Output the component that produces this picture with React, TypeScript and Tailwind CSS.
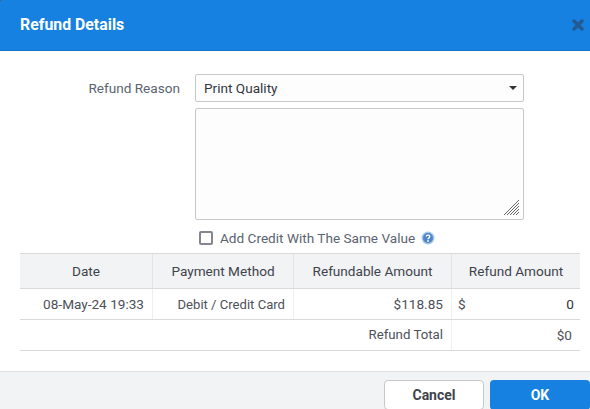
const columns = ["Date", "Payment Method", "Refundable Amount", "Refund Amount"];

function CloseIcon() {
  return (
    <svg width="12" height="12" viewBox="0 0 12 12" className="text-[#235a8f]">
      <path d="M2 2 L10 10 M10 2 L2 10" stroke="currentColor" strokeWidth="3.4" strokeLinecap="round" />
    </svg>
  );
}

function HelpIcon() {
  return (
    <svg width="14" height="14" viewBox="0 0 14 14">
      <circle cx="7" cy="7" r="6.5" fill="#a6c6ea" />
      <circle cx="7" cy="7" r="5" fill="#4f84c8" />
      <path d="M5.2 5.6 C5.2 3.6 8.8 3.6 8.8 5.6 C8.8 6.9 7 6.8 7 8.2" stroke="#fff" strokeWidth="1.4" fill="none" />
      <circle cx="7" cy="10" r="0.9" fill="#fff" />
    </svg>
  );
}

function ResizeGrip() {
  return (
    <svg width="15" height="15" viewBox="0 0 15 15" className="absolute right-[4px] bottom-[4px] text-[#666]">
      <path d="M0 15 L15 0 M3 15 L15 3 M6 15 L15 6 M9 15 L15 9 M12 15 L15 12" stroke="currentColor" strokeWidth="1" fill="none" />
    </svg>
  );
}

export default function App() {
  return (
    <div className="flex h-[409px] w-[590px] flex-col overflow-hidden bg-[#555] font-['Roboto',sans-serif] text-[13.6px] text-[#4d5159]">
      <header className="flex h-[51px] shrink-0 items-center justify-between rounded-tl-[2px] border-b border-[#1474cb] bg-[#1681e0] pr-[6px] pl-[20px]">
        <h1 className="text-[15.85px] font-bold text-white">Refund Details</h1>
        <CloseIcon />
      </header>

      <main className="flex-1 bg-white pt-[23px] pr-[10px] pl-[20px]">
        <div className="flex items-start">
          <label className="w-[160px] pt-[4px] text-right text-[#5b6470]">Refund Reason</label>
          <div className="ml-[15px] w-[329px]">
            <div className="flex h-[28px] items-center justify-between rounded-[2px] border border-[#c8c8c8] bg-[#fdfdfd] pr-[6px] pl-[8px] text-[#33373d]">
              <span>Print Quality</span>
              <span className="h-0 w-0 border-x-[4px] border-t-[4px] border-x-transparent border-t-[#333]" />
            </div>
            <div className="relative mt-[6px] h-[112px] rounded-[2px] border border-[#c8c8c8] bg-[#fdfdfd]">
              <ResizeGrip />
            </div>
            <div className="mt-[8px] flex items-center pl-[4px]">
              <span className="h-[14px] w-[14px] rounded-[2px] border-2 border-[#85858f] bg-white" />
              <span className="ml-[7px] text-[#5b6470]">Add Credit With The Same Value</span>
              <span className="ml-[6px]">
                <HelpIcon />
              </span>
            </div>
          </div>
        </div>

        <div className="mt-[5px] border-t border-[#d9d9d9]">
          <div className="grid h-[35px] grid-cols-[133px_141px_158px_128px] border-b border-[#d9d9d9] bg-[#f2f3f5] text-[#3f444b]">
            {columns.map((col, i) => (
              <div key={col} className={`flex items-center justify-center ${i < 3 ? "border-r border-[#e4e4e4]" : ""}`}>
                {col}
              </div>
            ))}
          </div>
          <div className="grid h-[31px] grid-cols-[133px_141px_158px_128px] border-b border-[#d9d9d9]">
            <div className="flex items-center justify-end border-r border-[#efefef] pr-[8px]">08-May-24 19:33</div>
            <div className="flex items-center justify-end border-r border-[#efefef] pr-[8px] text-[13.1px]">Debit / Credit Card</div>
            <div className="flex items-center justify-end border-r border-[#efefef] pr-[8px]">$118.85</div>
            <div className="flex items-center justify-between pr-[6px] pl-[6px]">
              <span>$</span>
              <span className="text-[#2e3237]">0</span>
            </div>
          </div>
          <div className="grid h-[31px] grid-cols-[432px_128px] border-b border-[#d9d9d9]">
            <div className="flex items-center justify-end border-r border-[#efefef] pr-[8px] text-[13.25px]">Refund Total</div>
            <div className="flex items-center justify-end pr-[8px]">$0</div>
          </div>
        </div>
      </main>

      <footer className="flex h-[38px] shrink-0 items-start justify-end gap-[6px] border-t border-[#dfdfdf] bg-[#f2f3f5] pt-[8px]">
        <button className="h-[30px] w-[100px] rounded-[4px] border border-[#c8c8c8] bg-white text-[14px] font-bold text-[#3f444b]">
          Cancel
        </button>
        <button className="h-[30px] w-[100px] rounded-[4px] bg-[#1681e0] text-[14px] font-bold text-white">OK</button>
      </footer>
    </div>
  );
}
